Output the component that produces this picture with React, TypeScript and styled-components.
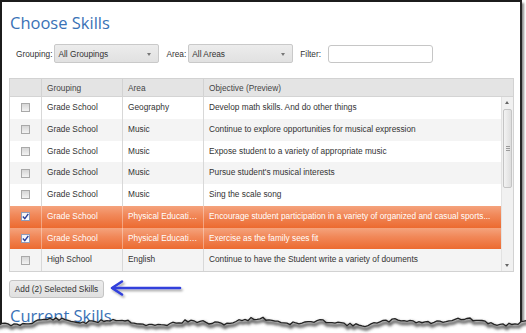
import React from "react";
import styled, { createGlobalStyle } from "styled-components";

const GlobalStyle = createGlobalStyle`
  html, body {
    margin: 0;
    padding: 0;
    background: #fff;
  }
  body {
    font-family: "Liberation Sans", Arial, sans-serif;
    color: #333;
  }
`;

type Skill = {
  group: string;
  area: string;
  objective: string;
  checked?: boolean;
};

const skills: Skill[] = [
  { group: "Grade School", area: "Geography", objective: "Develop math skills. And do other things" },
  { group: "Grade School", area: "Music", objective: "Continue to explore opportunities for musical expression" },
  { group: "Grade School", area: "Music", objective: "Expose student to a variety of appropriate music" },
  { group: "Grade School", area: "Music", objective: "Pursue student's musical interests" },
  { group: "Grade School", area: "Music", objective: "Sing the scale song" },
  {
    group: "Grade School",
    area: "Physical Education",
    objective: "Encourage student participation in a variety of organized and casual sports...",
    checked: true,
  },
  { group: "Grade School", area: "Physical Education", objective: "Exercise as the family sees fit", checked: true },
  { group: "High School", area: "English", objective: "Continue to have the Student write a variety of douments" },
];

// jagged line for the torn paper edge
const tearPoints = () => {
  let seed = 11;
  const rnd = () => {
    seed = (seed * 9301 + 49297) % 233280;
    return seed / 233280;
  };
  const pts: string[] = [];
  for (let x = -2; x <= 530; x += 3) {
    const y = 17 + 2 * Math.sin(x / 11) + 1.6 * Math.sin(x / 29 + 2) + (rnd() - 0.5) * 3.2;
    pts.push(`${x},${y.toFixed(1)}`);
  }
  return pts;
};

const App = () => {
  const pts = tearPoints();
  const line = "M" + pts.join(" L");
  const fill = line + " L530,40 L-2,40 Z";

  return (
    <Root>
      <GlobalStyle />
      <Frame>
        <Page>
          <Title>Choose Skills</Title>
          <FilterBar>
            <Field>
              <Label>Grouping:</Label>
              <Select>
                All Groupings
                <Caret />
              </Select>
            </Field>
            <Field>
              <Label>Area:</Label>
              <Select>
                All Areas
                <Caret />
              </Select>
            </Field>
            <Field>
              <Label>Filter:</Label>
              <TextBox />
            </Field>
          </FilterBar>

          <GridBox>
            <HeadRow>
              <HeadCell />
              <HeadCell $divider>Grouping</HeadCell>
              <HeadCell $divider>Area</HeadCell>
              <HeadCell $divider>Objective (Preview)</HeadCell>
            </HeadRow>
            <Body>
              <RowList>
                {skills.map((s, i) => (
                  <RowLine key={i} $odd={i % 2 === 1} $selected={!!s.checked}>
                    <BoxCell>
                      <CheckBox $checked={!!s.checked}>
                        {s.checked && (
                          <svg width="7" height="7" viewBox="0 0 7 7">
                            <path d="M0.8 3.6 L2.8 5.6 L6.3 0.8" fill="none" stroke="#2c3f9a" strokeWidth="1.4" />
                          </svg>
                        )}
                      </CheckBox>
                    </BoxCell>
                    <Cell $selected={!!s.checked}>{s.group}</Cell>
                    <Cell $selected={!!s.checked}>{s.area}</Cell>
                    <Cell $selected={!!s.checked}>{s.objective}</Cell>
                  </RowLine>
                ))}
              </RowList>
              <ScrollTrack>
                <ScrollArrow $up />
                <Thumb>
                  <Grip />
                  <Grip />
                  <Grip />
                </Thumb>
                <TrackFill />
                <ScrollArrow />
              </ScrollTrack>
            </Body>
          </GridBox>

          <Actions>
            <AddButton>Add (2) Selected Skills</AddButton>
            <svg width="80" height="22" viewBox="0 0 80 22">
              <defs>
                <filter id="arrowShadow" x="-20%" y="-50%" width="140%" height="200%">
                  <feDropShadow dx="1.5" dy="2" stdDeviation="1.2" floodColor="#000" floodOpacity="0.35" />
                </filter>
              </defs>
              <g filter="url(#arrowShadow)" stroke="#3140dc" strokeWidth="2.6" strokeLinecap="round" fill="none">
                <path d="M72 10 L5 10" />
                <path d="M14 3.5 L4 10 L14 16.5" strokeLinejoin="round" />
              </g>
            </svg>
          </Actions>

          <SubTitle>Current Skills</SubTitle>
        </Page>
      </Frame>

      <Tear width="530" height="40" viewBox="0 0 530 40">
        <defs>
          <filter id="tearShadow" x="-5%" y="-100%" width="110%" height="300%">
            <feGaussianBlur stdDeviation="1.6" />
          </filter>
        </defs>
        <path d={fill} fill="#fff" />
        <path d={line} transform="translate(1,2.5)" fill="none" stroke="#555" strokeWidth="3" filter="url(#tearShadow)" />
        <path d={line} fill="none" stroke="#222" strokeWidth="1.3" />
      </Tear>
    </Root>
  );
};

export default App;

const Root = styled.div`
  position: relative;
  width: 526px;
  height: 333px;
  overflow: hidden;
  background: #fff;
`;

const Frame = styled.div`
  box-sizing: border-box;
  width: 522px;
  height: 333px;
  border-left: 2px solid #1c1c1c;
  border-top: 2px solid #1c1c1c;
  border-right: 2px solid #262626;
  box-shadow: 2px 3px 2px rgba(0, 0, 0, 0.45);
  background: #fff;
`;

const Page = styled.div`
  display: flex;
  flex-direction: column;
  padding: 10px 7px 0 7px;
`;

const Title = styled.h1`
  margin: 0 0 0 1px;
  font-family: "Open Sans", "Noto Sans", sans-serif;
  font-weight: 400;
  font-size: 16.5px;
  line-height: 22px;
  color: #3a72b6;
`;

const SubTitle = styled(Title).attrs({ as: "h2" })`
  margin-top: 7px;
`;

const FilterBar = styled.div`
  display: flex;
  align-items: center;
  gap: 7px;
  margin: 10px 0 0 7px;
  height: 19px;
`;

const Field = styled.div`
  display: flex;
  align-items: center;
  gap: 2px;
`;

const Label = styled.span`
  font-size: 8.3px;
  color: #333;
`;

const Select = styled.div`
  position: relative;
  box-sizing: border-box;
  width: 105px;
  height: 19px;
  padding-left: 3px;
  display: flex;
  align-items: center;
  font-size: 8.3px;
  color: #333;
  background: linear-gradient(#ececec, #e1e1e1);
  border: 1px solid #c9c9c9;
  border-radius: 2px;
`;

const Caret = styled.span`
  position: absolute;
  right: 7px;
  top: 8px;
  border-left: 2.5px solid transparent;
  border-right: 2.5px solid transparent;
  border-top: 3px solid #777;
`;

const TextBox = styled.div`
  box-sizing: border-box;
  width: 105px;
  height: 18px;
  margin-left: 5px;
  background: #fff;
  border: 1px solid #c6c6c6;
  border-radius: 3px;
`;

const GridBox = styled.div`
  box-sizing: border-box;
  width: 505px;
  margin-top: 15px;
  border: 1px solid #d2d2d2;
  font-size: 8.3px;
`;

const cols = "31px 81px 81px 1fr";

const HeadRow = styled.div`
  display: grid;
  grid-template-columns: ${cols};
  height: 17px;
  background: #e4e4e4;
  border-bottom: 1px solid #d4d4d4;
`;

const HeadCell = styled.div<{ $divider?: boolean }>`
  display: flex;
  align-items: center;
  padding-left: 5px;
  color: #444;
  border-left: ${(p) => (p.$divider ? "1px solid #d2d2d2" : "none")};
`;

const Body = styled.div`
  display: flex;
  height: 174px;
`;

const RowList = styled.div`
  flex: 1;
  min-width: 0;
  display: flex;
  flex-direction: column;
`;

const RowLine = styled.div<{ $odd: boolean; $selected: boolean }>`
  display: grid;
  grid-template-columns: ${cols};
  height: 21.75px;
  background: ${(p) =>
    p.$selected
      ? "linear-gradient(#f5a37d 0%, #f1895a 40%, #ec6a30 100%)"
      : p.$odd
      ? "#f4f4f4"
      : "#fff"};
  color: ${(p) => (p.$selected ? "#fff" : "#333")};
`;

const BoxCell = styled.div`
  display: flex;
  align-items: center;
  justify-content: center;
`;

const CheckBox = styled.span<{ $checked: boolean }>`
  box-sizing: border-box;
  width: 9px;
  height: 9px;
  display: flex;
  align-items: center;
  justify-content: center;
  border: 1px solid ${(p) => (p.$checked ? "#8f9bb8" : "#a9a9a9")};
  background: ${(p) => (p.$checked ? "linear-gradient(#f2f2f6, #fff)" : "linear-gradient(#d6d6d6, #f3f3f3)")};
`;

const Cell = styled.div<{ $selected: boolean }>`
  display: block;
  min-width: 0;
  padding: 0 5px;
  line-height: 21px;
  border-left: 1px solid ${(p) => (p.$selected ? "rgba(255, 255, 255, 0.35)" : "#d8d8d8")};
  white-space: nowrap;
  overflow: hidden;
  text-overflow: ellipsis;
`;

const ScrollTrack = styled.div`
  width: 11px;
  display: flex;
  flex-direction: column;
  align-items: center;
  background: #f1f1f1;
  border-left: 1px solid #e2e2e2;
`;

const ScrollArrow = styled.span<{ $up?: boolean }>`
  height: 12px;
  width: 100%;
  position: relative;

  &::after {
    content: "";
    position: absolute;
    left: 3px;
    top: ${(p) => (p.$up ? "4px" : "5px")};
    border-left: 2.5px solid transparent;
    border-right: 2.5px solid transparent;
    ${(p) => (p.$up ? "border-bottom: 3px solid #666;" : "border-top: 3px solid #666;")}
  }
`;

const Thumb = styled.div`
  box-sizing: border-box;
  width: 9px;
  height: 79px;
  display: flex;
  flex-direction: column;
  align-items: center;
  justify-content: center;
  gap: 1px;
  background: linear-gradient(90deg, #f3f3f3, #dedede);
  border: 1px solid #c4c4c4;
  border-radius: 2px;
`;

const Grip = styled.span`
  width: 4px;
  height: 1px;
  background: #9a9a9a;
`;

const TrackFill = styled.div`
  flex: 1;
`;

const Actions = styled.div`
  display: flex;
  align-items: center;
  gap: 4px;
  margin-top: 8px;
  height: 18px;
`;

const AddButton = styled.button`
  box-sizing: border-box;
  height: 18px;
  width: 95px;
  padding: 0;
  font-family: "Liberation Sans", Arial, sans-serif;
  font-size: 8.3px;
  color: #333;
  background: linear-gradient(#ececec, #e0e0e0);
  border: 1px solid #c4c4c4;
  border-radius: 3px;
`;

const Tear = styled.svg`
  position: absolute;
  left: -2px;
  top: 305px;
`;
